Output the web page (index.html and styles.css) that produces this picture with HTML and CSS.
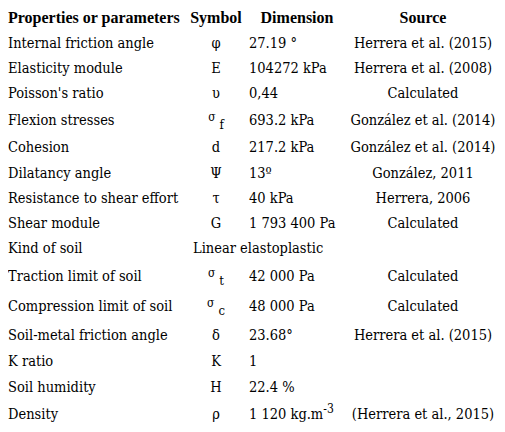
FILE: index.html
```html
<!DOCTYPE html>
<html>

<head>
    <title>Soil parameters</title>
    <link rel="stylesheet" href="styles.css">
</head>

<body>
    <table id="parametri">
        <tr class="randCap">
            <th class="colNume">Properties or parameters</th>
            <th class="colSimbol">Symbol</th>
            <th class="colDim">Dimension</th>
            <th class="colSursa">Source</th>
        </tr>
        <tr class="r25">
            <td>Internal friction angle</td>
            <td class="simbol">φ</td>
            <td class="dim">27.19 °</td>
            <td class="sursa">Herrera et al. (2015)</td>
        </tr>
        <tr class="r25">
            <td>Elasticity module</td>
            <td class="simbol">E</td>
            <td class="dim">104272 kPa</td>
            <td class="sursa">Herrera et al. (2008)</td>
        </tr>
        <tr class="r26">
            <td>Poisson's ratio</td>
            <td class="simbol">υ</td>
            <td class="dim">0,44</td>
            <td class="sursa">Calculated</td>
        </tr>
        <tr class="r27">
            <td>Flexion stresses</td>
            <td class="simbol"><span class="sigma">σ</span><span class="indice">f</span></td>
            <td class="dim">693.2 kPa</td>
            <td class="sursa">González et al. (2014)</td>
        </tr>
        <tr class="r27">
            <td>Cohesion</td>
            <td class="simbol">d</td>
            <td class="dim">217.2 kPa</td>
            <td class="sursa">González et al. (2014)</td>
        </tr>
        <tr class="r25">
            <td>Dilatancy angle</td>
            <td class="simbol">Ψ</td>
            <td class="dim">13º</td>
            <td class="sursa">González, 2011</td>
        </tr>
        <tr class="r25">
            <td>Resistance to shear effort</td>
            <td class="simbol">τ</td>
            <td class="dim">40 kPa</td>
            <td class="sursa">Herrera, 2006</td>
        </tr>
        <tr class="r25">
            <td>Shear module</td>
            <td class="simbol">G</td>
            <td class="dim">1 793 400 Pa</td>
            <td class="sursa">Calculated</td>
        </tr>
        <tr class="r26">
            <td>Kind of soil</td>
            <td class="tipSol" colspan="2">Linear elastoplastic</td>
            <td></td>
        </tr>
        <tr class="r29">
            <td>Traction limit of soil</td>
            <td class="simbol"><span class="sigma">σ</span><span class="indice">t</span></td>
            <td class="dim">42 000 Pa</td>
            <td class="sursa">Calculated</td>
        </tr>
        <tr class="r31">
            <td>Compression limit of soil</td>
            <td class="simbol"><span class="sigma">σ</span><span class="indice">c</span></td>
            <td class="dim">48 000 Pa</td>
            <td class="sursa">Calculated</td>
        </tr>
        <tr class="r27">
            <td>Soil-metal friction angle</td>
            <td class="simbol">δ</td>
            <td class="dim">23.68°</td>
            <td class="sursa">Herrera et al. (2015)</td>
        </tr>
        <tr class="r26">
            <td>K ratio</td>
            <td class="simbol">K</td>
            <td class="dim">1</td>
            <td></td>
        </tr>
        <tr class="r26">
            <td>Soil humidity</td>
            <td class="simbol">H</td>
            <td class="dim">22.4 %</td>
            <td></td>
        </tr>
        <tr class="r28">
            <td>Density</td>
            <td class="simbol">ρ</td>
            <td class="dim">1 120 kg.m<span class="exponent">-3</span></td>
            <td class="sursa">(Herrera et al., 2015)</td>
        </tr>
    </table>
</body>

</html>
```

FILE: styles.css
```css
body {
    margin: 5px 8px;
    background-color: #ffffff;
    color: #000000;
    font-family: "DejaVu Serif Condensed", "DejaVu Serif", serif;
    font-stretch: condensed;
    font-size: 14.5px;
}

#parametri {
    border-collapse: collapse;
    width: 490px;
    table-layout: fixed;
}

#parametri th,
#parametri td {
    padding: 0px;
    vertical-align: middle;
    white-space: nowrap;
    line-height: 18px;
}

#parametri th {
    font-family: "Liberation Serif", serif;
    font-stretch: normal;
    font-size: 16px;
    font-weight: bold;
}

.randCap {
    height: 25px;
}

.colNume {
    width: 178px;
    text-align: left;
}

.colSimbol {
    width: 60px;
    text-align: center;
}

.colDim {
    width: 102px;
    text-align: center;
}

.colSursa {
    width: 150px;
    text-align: center;
}

.r25 {
    height: 25px;
}

.r26 {
    height: 26px;
}

.r27 {
    height: 27px;
}

.r28 {
    height: 28px;
}

.r29 {
    height: 29px;
}

.r31 {
    height: 31px;
}

.simbol {
    text-align: center;
}

.dim {
    padding-left: 3px !important;
}

.sursa {
    text-align: center;
}

.tipSol {
    padding-left: 7px !important;
}

.sigma {
    font-size: 12px;
    line-height: 0;
    vertical-align: 4px;
}

.indice {
    font-size: 13px;
    line-height: 0;
    vertical-align: -4px;
    margin-left: 4px;
}

.exponent {
    font-size: 12px;
    line-height: 0;
    vertical-align: 6px;
}
```
